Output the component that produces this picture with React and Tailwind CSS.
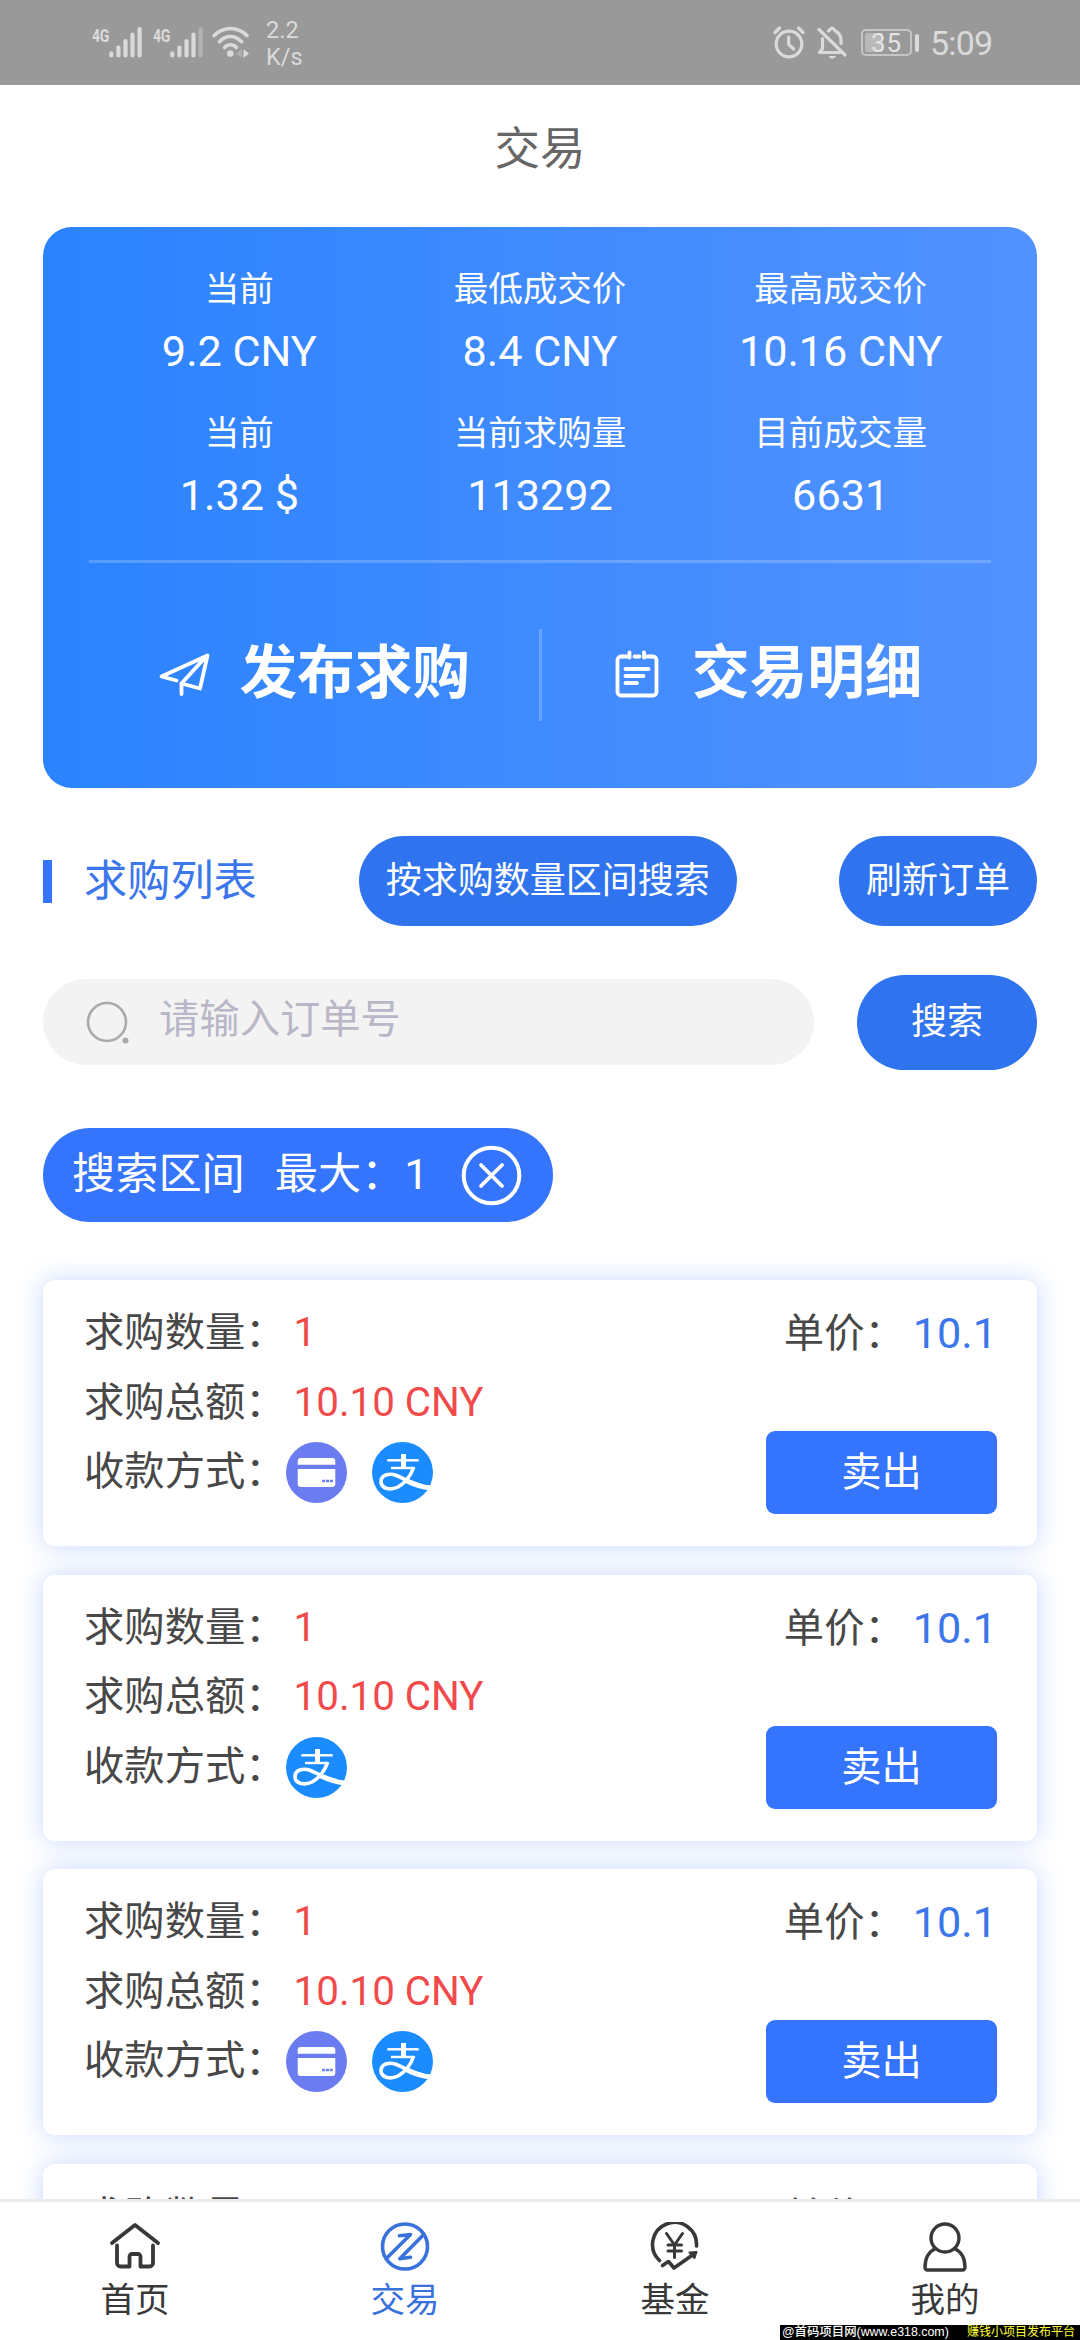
import React from "react";

const stats = [
  { label: "当前", value: "9.2 CNY" },
  { label: "最低成交价", value: "8.4 CNY" },
  { label: "最高成交价", value: "10.16 CNY" },
  { label: "当前", value: "1.32 $" },
  { label: "当前求购量", value: "113292" },
  { label: "目前成交量", value: "6631" },
];

const orders = [
  { id: 1, count: "1", total: "10.10 CNY", price: "10.1", pay: ["card", "alipay"] },
  { id: 2, count: "1", total: "10.10 CNY", price: "10.1", pay: ["alipay"] },
  { id: 3, count: "1", total: "10.10 CNY", price: "10.1", pay: ["card", "alipay"] },
  { id: 4, count: "1", price: "10.1" },
];

function Signal({ weak }) {
  return (
    <div className="flex items-start">
      <span className="w-[17px] text-[18px] leading-[18px] font-bold tracking-[-0.5px] origin-left scale-x-[0.78] whitespace-nowrap pt-px">
        4G
      </span>
      <svg width="33" height="32" viewBox="0 0 33 32" stroke="#dadada" strokeWidth="4.2" strokeLinecap="round">
        <path d="M2.3 27.4v2M9.4 21.6v7.8M16.5 15v14.4M23.5 8.6v20.8" />
        <path d="M30.6 3v26.4" opacity={weak ? 0.4 : 1} />
      </svg>
    </div>
  );
}

function WifiIcon() {
  return (
    <svg width="37" height="32" viewBox="0 0 37 32" fill="none" stroke="#dadada" strokeWidth="3.6" strokeLinecap="round">
      <path d="M2 9.6C11.500 0.200 25.500 0.200 35 9.6" />
      <path d="M7.400 15.800C14 8.800 23 8.800 29.600 15.800" />
      <path d="M12.600 21.400C16 17.800 21 17.800 24.400 21.400" />
      <circle cx="18.300" cy="27.600" r="3.300" fill="#dadada" stroke="none" />
      <path d="M24 27.600l6-4.300v8.600z" fill="#adadad" stroke="none" />
      <path d="M31.500 23.300l5.500 4.300-5.500 4.300z" fill="#dadada" stroke="none" />
    </svg>
  );
}

function AlarmIcon() {
  return (
    <svg width="32" height="33" viewBox="0 0 32 33" fill="none" stroke="#dadada" strokeWidth="3.2" strokeLinecap="round">
      <circle cx="16" cy="18" r="12.800" />
      <path d="M15.700 11v7.500l5 4.500" strokeWidth="3.200" />
      <path d="M2 6.500L6.500 2M30 6.500L25.500 2" />
    </svg>
  );
}

function BellOffIcon() {
  return (
    <svg width="30" height="33" viewBox="0 0 30 33" fill="none" stroke="#dadada" strokeWidth="3.2" strokeLinecap="round" strokeLinejoin="round">
      <path d="M2 3.500L28 29" />
      <path d="M5.500 12.500V22.500L2.500 26.500H24.500" />
      <path d="M11.500 5C13 4 13.500 2 15 2s2 2 4 3.500c3.500 2 5 4.500 5 8.500v3.500" />
      <path d="M11.500 30h7.500c-1 2-2.300 2.700-3.700 2.700S12.500 32 11.500 30z" fill="#dadada" stroke="none" />
    </svg>
  );
}

function StatusBar() {
  return (
    <div className="flex h-[85px] shrink-0 items-start bg-[#999999] pl-[92px] pr-[87px] text-[#dadada]">
      <div className="flex pt-[26px]">
        <Signal />
        <div className="w-[11px]" />
        <Signal weak />
        <div className="ml-[9px]">
          <WifiIcon />
        </div>
      </div>
      <div className="ml-[17px] pt-[17px] text-[23.500px] leading-[27px]">
        <div>2.2</div>
        <div>K/s</div>
      </div>
      <div className="ml-auto flex items-start pt-[26px]">
        <AlarmIcon />
        <div className="ml-[12px]">
          <BellOffIcon />
        </div>
        <div className="ml-[14px] mt-[3px] flex items-center">
          <div className="flex h-[27px] w-[51px] items-center rounded-[5px] border-2 border-[#c6c6c6] p-[2px]">
            <div className="h-full w-[18px] rounded-[2px] bg-[#b9b9b9]" />
            <span className="-ml-[12px] text-[26px] leading-[20px] tracking-[0.8px] text-[#e2e2e2]">35</span>
          </div>
          <div className="ml-[3px] h-[18px] w-[4px] rounded-[2px] bg-[#dadada]" />
        </div>
        <span className="ml-[11px] -mt-[3px] w-[63px] whitespace-nowrap text-[34px] leading-[40px] tracking-[-0.8px]">5:09</span>
      </div>
    </div>
  );
}

function PlaneIcon() {
  return (
    <svg width="54" height="54" viewBox="0 0 54 54" fill="none" stroke="#fff" strokeWidth="3.800" strokeLinecap="round" strokeLinejoin="round">
      <path d="M18.500 32.500L3.500 28.500L49.500 7.500L42 40.500L23.500 35.500L48.500 8" />
      <path d="M23.500 35.500V46" />
    </svg>
  );
}

function NoteIcon() {
  return (
    <svg width="54" height="54" viewBox="0 0 54 54" fill="none" stroke="#fff" strokeWidth="3.800" strokeLinecap="round" strokeLinejoin="round">
      <path d="M12.500 8.500H11a3.500 3.500 0 0 0-3.500 3.500V44A3.500 3.500 0 0 0 11 47.500H43A3.500 3.500 0 0 0 46.500 44V12A3.500 3.500 0 0 0 43 8.500H41.500M24.500 8.500H29.500" />
      <path d="M12.500 8.500H17M37 8.500H41.500M19.500 4.500V9.500M34 4.500V9.500" />
      <path d="M15.500 21H38.500M15.500 28H33.500M15.500 35H27" />
    </svg>
  );
}

function SummaryCard() {
  return (
    <section className="mx-[43px] mt-[12px] h-[561px] rounded-[29px] bg-linear-to-r from-[#2a83ff] to-[#5192ff] px-[46px] pt-[31px] text-white">
      <div className="grid grid-cols-3 gap-y-[18px]">
        {stats.map((s, i) => (
          <div key={i} className="text-center">
            <div className="text-[34.560px] leading-[62px]">{s.label}</div>
            <div className="text-[43.200px] leading-[64px]">{s.value}</div>
          </div>
        ))}
      </div>
      <div className="mt-[32px] h-[3px] bg-white/20" />
      <div className="flex h-[224px] items-center">
        <div className="flex flex-1 items-center justify-center gap-[28px]">
          <PlaneIcon />
          <span className="-mt-[3px] text-[57.600px] leading-[70px] font-bold">发布求购</span>
        </div>
        <div className="h-[92px] w-[3px] bg-white/20" />
        <div className="flex flex-1 items-center justify-center gap-[28px]">
          <NoteIcon />
          <span className="-mt-[3px] text-[57.600px] leading-[70px] font-bold">交易明细</span>
        </div>
      </div>
    </section>
  );
}

function ListHeader() {
  return (
    <div className="mx-[43px] mt-[48px] flex h-[90px] items-center justify-between">
      <div className="flex items-center">
        <div className="h-[43px] w-[9px] bg-[#3574fc]" />
        <span className="ml-[32px] mt-[2px] text-[43.200px] leading-[60px] text-[#3b76ea]">求购列表</span>
      </div>
      <button className="h-[90px] w-[378px] rounded-full bg-[#2f74ee] text-[36px] leading-[90px] text-white">
        按求购数量区间搜索
      </button>
      <button className="h-[90px] w-[198px] rounded-full bg-[#2f74ee] text-[36px] leading-[90px] text-white">
        刷新订单
      </button>
    </div>
  );
}

function SearchRow() {
  return (
    <div className="mx-[43px] mt-[49px] flex items-center justify-between">
      <div className="-mt-px flex h-[86px] w-[771px] items-center rounded-full bg-[#f3f3f3] pl-[42px]">
        <svg width="46" height="46" viewBox="0 0 46 46" fill="none">
          <circle cx="22" cy="23" r="19" stroke="#aaaaaa" strokeWidth="2.600" />
          <circle cx="40.500" cy="41.500" r="3" fill="#aaaaaa" />
        </svg>
        <span className="-mt-[4px] ml-[28px] text-[40.320px] leading-[60px] text-[#b9b7c7]">请输入订单号</span>
      </div>
      <button className="h-[95px] w-[180px] rounded-full bg-[#2f74ee] text-[36px] leading-[95px] text-white">搜索</button>
    </div>
  );
}

function RangeTag() {
  return (
    <div className="ml-[43px] mt-[58px] flex h-[94px] w-[510px] shrink-0 items-center rounded-full bg-[#3574fc] pl-[29px] text-[43.200px] leading-[92px] text-white">
      <span>搜索区间</span>
      <span className="ml-[30px]">最大：1</span>
      <svg className="ml-[32px]" width="61" height="61" viewBox="0 0 61 61" fill="none" stroke="#fff" strokeWidth="4" strokeLinecap="round">
        <circle cx="30.500" cy="30.500" r="27.800" />
        <path d="M20 20L41 41M41 20L20 41" strokeWidth="3.800" />
      </svg>
    </div>
  );
}

function CardPayIcon() {
  return (
    <svg width="61" height="61" viewBox="0 0 61 61">
      <circle cx="30.500" cy="30.500" r="30.500" fill="#6b7bf0" />
      <path d="M11.700 22.700V19a3 3 0 0 1 3-3H46.300a3 3 0 0 1 3 3V22.700zM11.700 27H49.300V42a3 3 0 0 1-3 3H14.700a3 3 0 0 1-3-3z" fill="#fff" />
      <path d="M36.200 39h10.600" stroke="#6b7bf0" strokeWidth="2.400" strokeDasharray="3 0.800" />
    </svg>
  );
}

function AlipayIcon() {
  return (
    <svg width="61" height="61" viewBox="0 0 61 61" fill="none">
      <circle cx="30.500" cy="30.500" r="30.500" fill="#1a8cff" />
      <g stroke="#fff" strokeWidth="3">
        <path d="M15.300 18.300H46.700" strokeWidth="2.400" />
        <path d="M31.500 12V26" strokeWidth="5" />
        <path d="M19 26H41.500" strokeWidth="2.400" />
        <path d="M41.800 25C39 33 33 41 26 45C19 48.500 9.500 47 9 40C8.700 33 17 30.500 24.500 33.500C33 37 42 43 58.500 46" strokeWidth="3.600" />
        <path d="M34 38.500C42 42.500 48 45 58.500 46" strokeWidth="4.800" />
      </g>
    </svg>
  );
}

function OrderCard({ order }) {
  return (
    <article className="flex h-[266px] shrink-0 justify-between rounded-[12px] bg-white pl-[41px] pr-[40px] pt-[18px] text-[40.320px] text-[#484848] shadow-[0_0_26px_rgba(53,116,252,0.28)]">
      <div className="leading-[69.600px]">
        <div className="flex">
          <span>求购数量：</span>
          <span className="ml-[8px] text-[#f04a4a]">{order.count}</span>
        </div>
        {order.total && (
          <div className="flex">
            <span>求购总额：</span>
            <span className="ml-[8px] text-[#f04a4a]">{order.total}</span>
          </div>
        )}
        {order.pay && (
          <div className="flex items-center">
            <span>收款方式：</span>
            <div className="flex gap-[25px] pt-px">
              {order.pay.map((p) => (p === "card" ? <CardPayIcon key={p} /> : <AlipayIcon key={p} />))}
            </div>
          </div>
        )}
      </div>
      <div className="flex flex-col items-end">
        <div className="flex leading-[72px]">
          <span>单价：</span>
          <span className="ml-[8px] text-[43.200px] text-[#3b76ea]">{order.price}</span>
        </div>
        {order.pay && (
          <button className="mt-[61px] h-[83px] w-[231px] rounded-[9px] bg-[#3574fc] leading-[83px] text-white">卖出</button>
        )}
      </div>
    </article>
  );
}

function HomeIcon() {
  return (
    <svg width="54" height="50" viewBox="0 0 54 50" fill="none" stroke="#383838" strokeWidth="3.800" strokeLinecap="round" strokeLinejoin="round">
      <path d="M4 21L27 3L50 21" />
      <path d="M9 23.500V41a3.500 3.500 0 0 0 3.500 3.500H21.500V34.500a2.500 2.500 0 0 1 2.500-2.500H30a2.500 2.500 0 0 1 2.500 2.500V44.500H41.500A3.500 3.500 0 0 0 45 41V23.500" />
    </svg>
  );
}

function TradeIcon() {
  return (
    <svg width="54" height="50" viewBox="0 0 54 50" fill="none" stroke="#3a72dc" strokeWidth="3.600" strokeLinecap="round" strokeLinejoin="round">
      <circle cx="27" cy="24.500" r="22.500" />
      <path d="M21.500 13.800L32.500 12.500L8.800 36" />
      <path d="M45.300 13L21.800 36.700L32.500 35.300" />
    </svg>
  );
}

function FundIcon() {
  return (
    <svg width="54" height="50" viewBox="0 0 54 50" fill="none" stroke="#383838" strokeWidth="3.600" strokeLinecap="round" strokeLinejoin="round">
      <path d="M11.500 38.500A22 22 0 1 1 48.500 24" />
      <path d="M18.500 11.500L26.500 23L34.500 11.500M26.500 23V35.500M20 23H33.500M20 29H33.500" strokeWidth="3" />
      <path d="M14.500 43.500L20.500 39.500L26 46L46 32" />
      <path d="M41.500 30.500L48.500 30L46.500 36z" fill="#383838" strokeWidth="2" />
    </svg>
  );
}

function UserIcon() {
  return (
    <svg width="54" height="50" viewBox="0 0 54 50" fill="none" stroke="#383838" strokeWidth="3.400" strokeLinecap="round" strokeLinejoin="round">
      <circle cx="27" cy="16" r="14" />
      <path d="M17.500 26.500C10 30 7 37 7 45.500a2.500 2.500 0 0 0 2.500 2.500H44.500a2.500 2.500 0 0 0 2.500-2.500C47 37 44 30 36.500 26.500" />
    </svg>
  );
}

const tabs = [
  { label: "首页", Icon: HomeIcon },
  { label: "交易", Icon: TradeIcon, active: true },
  { label: "基金", Icon: FundIcon },
  { label: "我的", Icon: UserIcon },
];

function TabBar() {
  return (
    <nav className="grid h-[141px] shrink-0 grid-cols-4 border-t-[3px] border-[#ececec] bg-white">
      {tabs.map(({ label, Icon, active }) => (
        <div key={label} className="flex flex-col items-center pt-[20px]">
          <Icon />
          <span className={active ? "mt-[8px] text-[34.560px] leading-[40px] text-[#3a72dc]" : "mt-[8px] text-[34.560px] leading-[40px] text-[#383838]"}>
            {label}
          </span>
        </div>
      ))}
    </nav>
  );
}

export default function App() {
  return (
    <div
      lang="zh-CN"
      className="relative flex h-[2340px] w-[1080px] flex-col overflow-hidden bg-white font-[Roboto,'Noto_Sans_CJK_SC',sans-serif]"
    >
      <StatusBar />
      <main className="flex min-h-0 flex-1 flex-col overflow-hidden">
        <h1 className="h-[130px] shrink-0 text-center text-[45.500px] leading-[130px] text-[#666666]">交易</h1>
        <div className="shrink-0">
          <SummaryCard />
          <ListHeader />
          <SearchRow />
          <RangeTag />
        </div>
        <div className="mx-[43px] mt-[58px] flex flex-col gap-[28.600px]">
          {orders.map((o) => (
            <OrderCard key={o.id} order={o} />
          ))}
        </div>
      </main>
      <TabBar />
      <div className="absolute bottom-0 right-0 flex h-[15px] w-[300px] items-center justify-between overflow-hidden whitespace-nowrap bg-black pl-[2px] pr-[5px] font-['Liberation_Sans','Noto_Sans_CJK_SC',sans-serif] text-[12px] leading-[15px]">
        <span className="text-[12.400px] font-medium text-white">@首码项目网(www.e318.com)</span>
        <span className="text-[#ffff33]">赚钱小项目发布平台</span>
      </div>
    </div>
  );
}
